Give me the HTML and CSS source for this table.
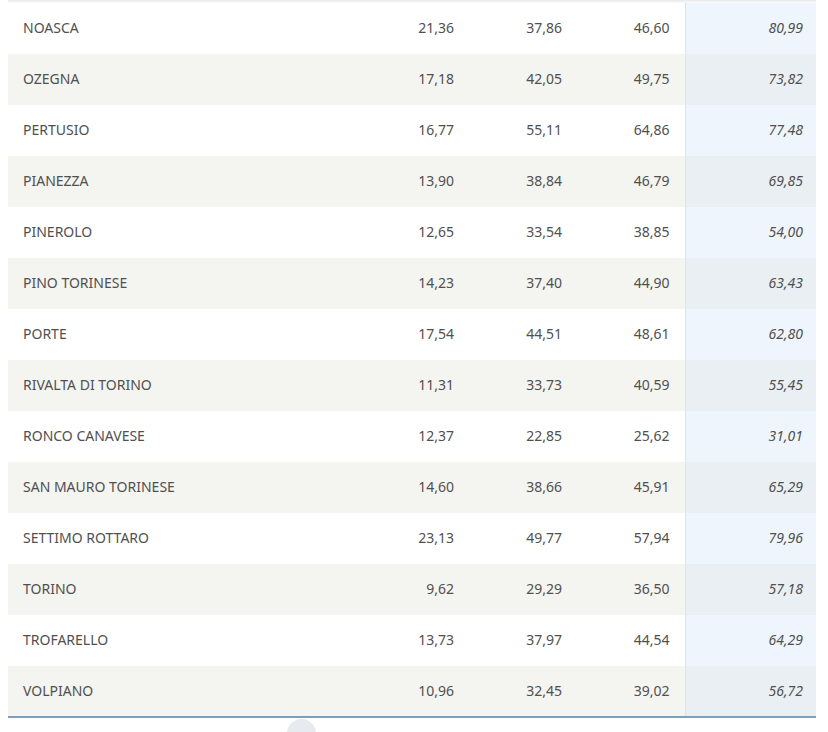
FILE: index.html
```html
<!DOCTYPE html>
<html lang="it">
<head>
<meta charset="utf-8">
<title>Tabella comuni</title>
<link rel="stylesheet" href="styles.css">
</head>
<body>
<div class="page">
  <div class="topshade"></div>
  <table class="data">
    <colgroup>
      <col class="c-name"><col class="c-num"><col class="c-num"><col class="c-num"><col class="c-hl">
    </colgroup>
    <tbody>
      <tr><td class="name">NOASCA</td><td>21,36</td><td>37,86</td><td>46,60</td><td class="hl">80,99</td></tr>
      <tr><td class="name">OZEGNA</td><td>17,18</td><td>42,05</td><td>49,75</td><td class="hl">73,82</td></tr>
      <tr><td class="name">PERTUSIO</td><td>16,77</td><td>55,11</td><td>64,86</td><td class="hl">77,48</td></tr>
      <tr><td class="name">PIANEZZA</td><td>13,90</td><td>38,84</td><td>46,79</td><td class="hl">69,85</td></tr>
      <tr><td class="name">PINEROLO</td><td>12,65</td><td>33,54</td><td>38,85</td><td class="hl">54,00</td></tr>
      <tr><td class="name">PINO TORINESE</td><td>14,23</td><td>37,40</td><td>44,90</td><td class="hl">63,43</td></tr>
      <tr><td class="name">PORTE</td><td>17,54</td><td>44,51</td><td>48,61</td><td class="hl">62,80</td></tr>
      <tr><td class="name">RIVALTA DI TORINO</td><td>11,31</td><td>33,73</td><td>40,59</td><td class="hl">55,45</td></tr>
      <tr><td class="name">RONCO CANAVESE</td><td>12,37</td><td>22,85</td><td>25,62</td><td class="hl">31,01</td></tr>
      <tr><td class="name">SAN MAURO TORINESE</td><td>14,60</td><td>38,66</td><td>45,91</td><td class="hl">65,29</td></tr>
      <tr><td class="name">SETTIMO ROTTARO</td><td>23,13</td><td>49,77</td><td>57,94</td><td class="hl">79,96</td></tr>
      <tr><td class="name">TORINO</td><td>9,62</td><td>29,29</td><td>36,50</td><td class="hl">57,18</td></tr>
      <tr><td class="name">TROFARELLO</td><td>13,73</td><td>37,97</td><td>44,54</td><td class="hl">64,29</td></tr>
      <tr><td class="name">VOLPIANO</td><td>10,96</td><td>32,45</td><td>39,02</td><td class="hl">56,72</td></tr>
    </tbody>
  </table>
  <div class="scroll-dot"></div>
</div>
</body>
</html>
```

FILE: styles.css
```css
html, body {
  margin: 0;
  padding: 0;
  background: #ffffff;
}

.page {
  position: relative;
  width: 828px;
  height: 732px;
  overflow: hidden;
  padding: 0 12px 0 8px;
  box-sizing: border-box;
  font-family: "Noto Sans", "Open Sans", sans-serif;
  font-size: 14px;
  color: #505050;
}

.topshade {
  height: 3px;
  background: linear-gradient(#e9e9e9, #fafafa);
}

.data {
  width: 808px;
  border-collapse: collapse;
  table-layout: fixed;
  border-bottom: 2px solid #7d9fbf;
}

.c-name { width: 353px; }
.c-num { width: 108px; }
.c-hl { width: 131px; }

.data td {
  height: 51px;
  padding: 0 15px 2px;
  box-sizing: border-box;
  text-align: right;
  vertical-align: middle;
  white-space: nowrap;
}

.data td.name {
  text-align: left;
  padding-left: 15px;
}

.data tr:nth-child(even) td {
  background: #f4f4f0;
}

.data td.hl {
  background: #eff5fc;
  border-left: 1px solid #dce4ec;
  font-style: italic;
  padding-right: 13px;
}

.data tr:nth-child(even) td.hl {
  background: #e9eff3;
}

.scroll-dot {
  position: absolute;
  left: 287px;
  top: 719px;
  width: 29px;
  height: 29px;
  border-radius: 50%;
  background: #e7ebf0;
}
```
